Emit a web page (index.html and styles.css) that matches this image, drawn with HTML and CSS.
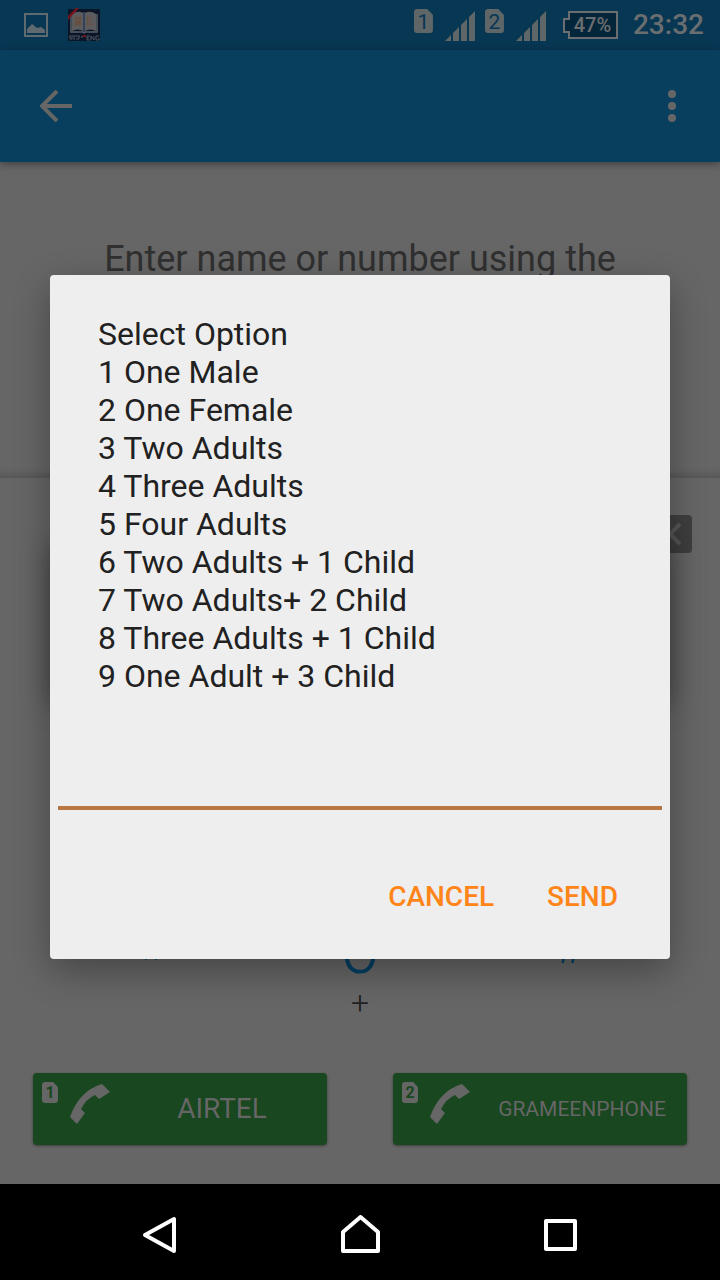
FILE: index.html
```html
<!DOCTYPE html>
<html lang="en">
<head>
<meta charset="utf-8">
<meta name="viewport" content="width=device-width, initial-scale=1">
<title>Dialer</title>
<link rel="stylesheet" href="styles.css">
</head>
<body>
<div class="screen">
  <header class="status">
    <div class="status-left">
      <svg width="24" height="24" viewBox="0 0 24 24" aria-hidden="true"><path d="M1 1h22v22H1z" fill="none" stroke="#5e6970" stroke-width="2"/><path d="M3 20v-4l5-5 5 4 4-1 4 3v3z" fill="#5e6970"/></svg>
      <svg width="34" height="34" viewBox="0 0 34 34" aria-hidden="true">
        <rect x="1" y="1" width="32" height="32" rx="1" fill="#0b1528"/>
        <path d="M4 6v18h12q1 2 2 0h12V6" fill="none" stroke="#5a606a" stroke-width="1.500"/>
        <path d="M5 6q6-4 11-1v18q-5-3-11 0zM18 5q5-3 11 1v17q-6-3-11 0z" fill="#5c5c5e"/>
        <path d="M16 4h2v20h-2z" fill="#33415a"/>
        <path d="M7 10h8M8 12q3-1 2 2t-2 1M10 14h3M13 10v8M8 17q2 1 4-2" fill="none" stroke="#704528"/>
        <text x="19" y="17" class="logo-letter">E</text>
        <path d="M1 8L9 0h3L1 12z" fill="#76131d"/>
        <path d="M2 28h11M3 28v3h2v-2M7 28v4M9 31h3v-3M20 28h3M20 28v4h3M20 30h2M24 32v-4l3 4v-4M32 28h-3v4h3v-2" fill="none" stroke="#4c5260"/>
        <path d="M14 29h2" stroke="#63666d"/><path d="M16 28h3" stroke="#76131d" stroke-width="2"/>
      </svg>
    </div>
    <div class="status-right">
      <span class="sim sim-status">1</span>
      <svg class="signal" width="30" height="30" viewBox="0 0 30 30" aria-hidden="true"><path d="M0 30l6-6v6zM8 30V22l6-6v14zM16 30V14l6-6v22zM24 30V6l6-6v30z"/></svg>
      <span class="sim sim-status">2</span>
      <svg class="signal" width="30" height="30" viewBox="0 0 30 30" aria-hidden="true"><path d="M0 30l6-6v6zM8 30V22l6-6v14zM16 30V14l6-6v22zM24 30V6l6-6v30z"/></svg>
      <span class="battery"><svg width="55" height="28" viewBox="0 0 55 28" aria-hidden="true"><path d="M6 1h48v26H6v-6H1V8h5z" fill="#04263b" stroke="#6b6e70" stroke-width="2"/></svg><span class="battery-text">47%</span></span>
      <time class="clock">23:32</time>
    </div>
  </header>
  <nav class="appbar">
    <button class="icon-button" aria-label="Back"><svg width="32" height="32" viewBox="0 0 32 32"><path d="M32 16H3M17 1L2 16l15 15" fill="none" stroke="#666" stroke-width="4"/></svg></button>
    <button class="icon-button" aria-label="More options"><svg width="8" height="32" viewBox="0 0 8 32" fill="#666"><circle cx="4" cy="4" r="4"/><circle cx="4" cy="16" r="4"/><circle cx="4" cy="28" r="4"/></svg></button>
  </nav>
  <main class="content">
    <section class="results"><p class="hint">Enter name or number using the</p></section>
    <section class="dialpad">
      <div class="entry"><button class="erase" aria-label="Delete"><svg width="18" height="24" viewBox="0 0 18 24"><path d="M16 2L6 12l10 10" fill="none" stroke="#575757" stroke-width="4"/></svg></button></div>
      <div class="keys">
        <button class="key symbol star">*</button>
        <button class="key zero">0<span class="plus">+</span></button>
        <button class="key symbol">#</button>
      </div>
      <div class="calls">
        <button class="call"><span class="sim sim-call">1</span><svg class="handset" width="40" height="40" viewBox="0 0 40 40" aria-hidden="true"><path d="M0 33Q9 7 32 0l8 8-11 7-4-4Q16 15 11 25l4 4-8 11z"/></svg><span class="carrier">AIRTEL</span></button>
        <button class="call"><span class="sim sim-call">2</span><svg class="handset" width="40" height="40" viewBox="0 0 40 40" aria-hidden="true"><path d="M0 33Q9 7 32 0l8 8-11 7-4-4Q16 15 11 25l4 4-8 11z"/></svg><span class="carrier carrier-long">GRAMEENPHONE</span></button>
      </div>
    </section>
  </main>
  <footer class="navbar">
    <button class="nav-button" aria-label="Back"><svg width="40" height="40" viewBox="0 0 40 40"><path d="M34 4v32L5 20z"/></svg></button>
    <button class="nav-button" aria-label="Home"><svg width="40" height="40" viewBox="0 0 40 40"><path d="M3 36V17L20.500 2 38 17v19z"/></svg></button>
    <button class="nav-button" aria-label="Recent apps"><svg width="40" height="40" viewBox="0 0 40 40"><path d="M6 6h29v28H6z"/></svg></button>
  </footer>
  <div class="overlay">
    <div class="rear-shadow"></div>
    <form class="dialog" role="dialog" aria-labelledby="menu">
      <label id="menu" class="menu" for="reply">Select Option
1 One Male
2 One Female
3 Two Adults
4 Three Adults
5 Four Adults
6 Two Adults + 1 Child
7 Two Adults+ 2 Child
8 Three Adults + 1 Child
9 One Adult + 3 Child</label>
      <input id="reply" class="reply" type="text" autocomplete="off">
      <div class="actions">
        <button class="action" type="button">CANCEL</button>
        <button class="action" type="button">SEND</button>
      </div>
    </form>
  </div>
</div>
</body>
</html>
```
FILE: styles.css
```css
* { box-sizing: border-box; }
body { margin: 0; background: #666; font-family: Roboto, "Noto Sans", sans-serif; }
button { margin: 0; padding: 0; border: 0; background: none; font-family: inherit; }
svg { display: block; flex: none; }

.screen { position: relative; display: flex; flex-direction: column; min-height: 100vh; }

.status { display: flex; justify-content: space-between; height: 50px; padding: 0 16px 0 24px; background: #083754; }
.status-left { display: flex; align-items: center; gap: 19px; }
.status-right { display: flex; align-items: center; color: #6b6e70; }
.sim { display: flex; align-items: center; justify-content: center; clip-path: polygon(0 0, 70% 0, 100% 25%, 100% 100%, 0 100%); border-radius: 3px; }
.sim-status { align-self: flex-start; width: 19px; height: 24px; margin-top: 9px; padding-top: 2px; background: #5e6668; color: #083754; font-size: 21px; font-weight: 400; }
.signal { margin: 2px 10px 0 12px; fill: #5e6668; }
.battery { position: relative; margin-left: 7px; }
.battery-text { position: absolute; inset: 0 0 0 4px; display: flex; align-items: center; justify-content: center; font-size: 20px; font-weight: 500; }
.clock { margin-left: 15px; font-size: 28px; font-weight: 500; line-height: 32px; }
.logo-letter { font-family: "Liberation Serif", serif; font-size: 13px; fill: #70503a; }

.appbar { position: relative; display: flex; align-items: center; justify-content: space-between; height: 112px; padding: 0 44px 0 40px; background: #083f5e; box-shadow: 0 2px 8px rgba(0, 0, 0, .4); }
.icon-button { display: block; }

.content { flex: 1; display: flex; flex-direction: column; }
.results { height: 316px; padding: 76px 48px 0; background: linear-gradient(to top, #575757, #646464 8px, #666 12px); text-align: center; }
.hint { margin: 0; color: #303030; font-size: 36px; line-height: 42px; }

.dialpad { flex: 1; display: flex; flex-direction: column; }
.entry { display: flex; justify-content: flex-end; padding: 37px 28px 0; }
.erase { display: flex; align-items: center; justify-content: flex-end; width: 56px; height: 38px; padding-right: 10px; border-radius: 4px; background: #3f3f3f; }
.keys { display: grid; grid-template-columns: repeat(3, 1fr); margin-top: auto; padding: 0 46px; }
.key { color: #003f63; font-weight: 300; }
.zero { display: flex; flex-direction: column; align-items: center; font-size: 72px; line-height: 76px; }
.symbol { align-self: start; padding-top: 12px; font-size: 48px; line-height: 48px; }
.star { padding-top: 24px; }
.plus { color: #222; font-size: 32px; line-height: 32px; }
.calls { display: grid; grid-template-columns: 1fr 1fr; gap: 66px; padding: 54px 33px 39px; }
.call { display: flex; align-items: flex-start; height: 72px; padding: 9px 0 0 9px; border-radius: 4px; background: #19471f; box-shadow: 0 1px 3px rgba(0, 0, 0, .4); color: #666; }
.sim-call { width: 16px; height: 21px; background: #666; color: #19471f; font-size: 16px; font-weight: 700; }
.handset { margin: 2px 7px 0 12px; fill: #666; }
.carrier { flex: 1; align-self: center; padding-bottom: 9px; font-size: 28px; line-height: 32px; text-align: center; }
.carrier-long { font-size: 21px; }

.navbar { position: relative; display: flex; justify-content: center; gap: 160px; height: 96px; padding-top: 6px; background: #000; }
.nav-button svg { fill: none; stroke: #fff; stroke-width: 4; stroke-linejoin: round; }

.overlay { position: absolute; inset: 50px 0 96px; display: flex; align-items: center; padding: 0 50px; }
.rear-shadow { position: absolute; inset: auto 50px; height: 160px; box-shadow: 0 8px 26px rgba(0, 0, 0, .36); }
.dialog { position: relative; flex: 1; padding: 40px 0 27px; border-radius: 4px; background: #eee; box-shadow: 0 12px 36px rgba(0, 0, 0, .32); }
.menu { display: block; padding: 0 48px; color: #212121; font-size: 32px; line-height: 38px; white-space: pre-line; }
.reply { display: block; width: calc(100% - 16px); height: 115px; margin: 0 8px; padding: 60px 0 0; border: 0; border-bottom: 4px solid #b97842; border-radius: 0; outline: 0; background: none; font: inherit; font-size: 32px; }
.actions { display: flex; justify-content: flex-end; gap: 5px; margin-top: 50px; padding-right: 28px; }
.action { height: 72px; padding: 0 24px; color: #ff8519; font-size: 28px; font-weight: 500; }
```
